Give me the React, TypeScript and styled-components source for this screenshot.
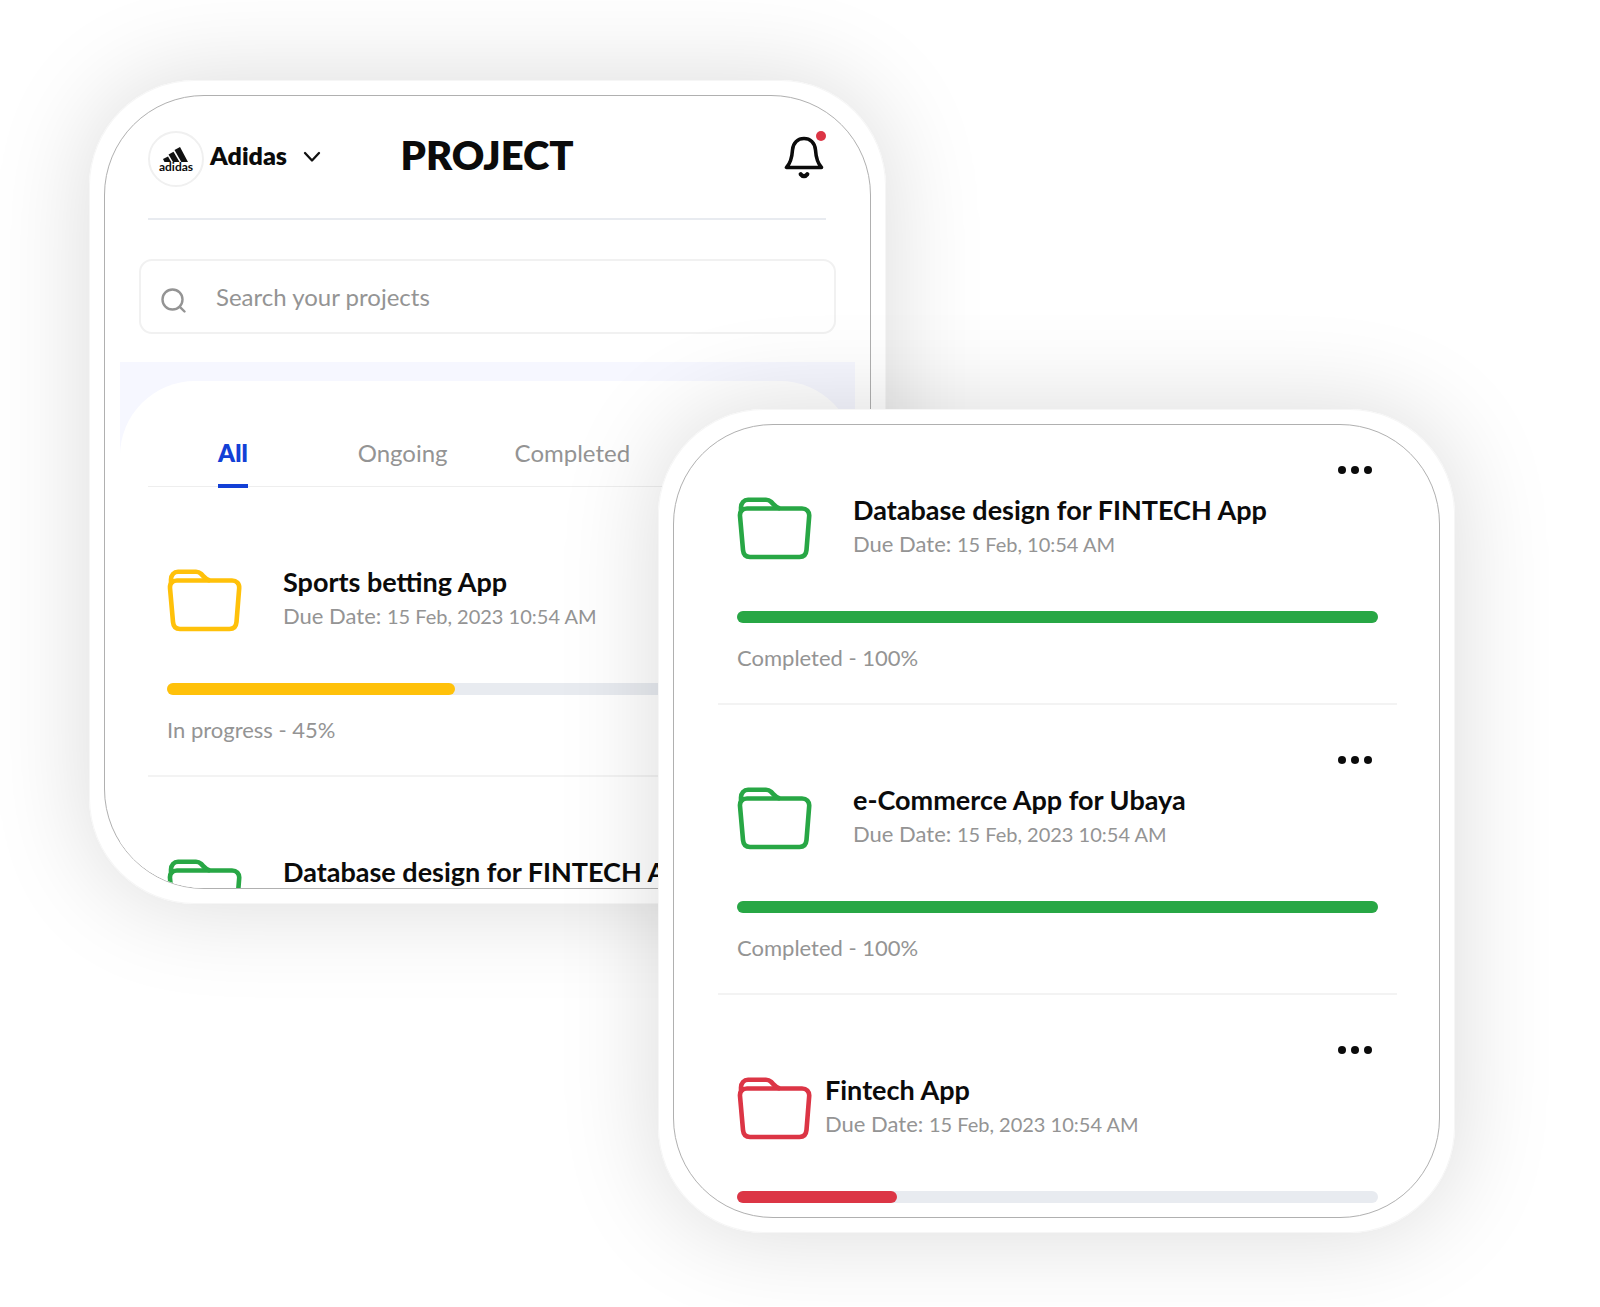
import React from "react";
import styled, { createGlobalStyle } from "styled-components";

const GlobalStyle = createGlobalStyle`
  *, *::before, *::after { box-sizing: border-box; }
  body { margin: 0; background: #ffffff; font-family: Lato, "Liberation Sans", sans-serif; color: #0b0b0b; }
  h1, h2, p, ul { margin: 0; padding: 0; }
  ul { list-style: none; }
  button { font: inherit; color: inherit; background: none; border: 0; padding: 0; cursor: pointer; }
`;

const Stage = styled.main`
  display: grid;
  grid-template-columns: 569fr 228fr 569fr;
  align-items: start;
  padding: 80px 145px 73px 89px;
`;

const Phone = styled.section<{ $front?: boolean }>`
  grid-row: 1;
  grid-column: ${(p) => (p.$front ? "2 / 4" : "1 / 3")};
  margin-top: ${(p) => (p.$front ? "329px" : "0")};
  display: flex;
  height: 824px;
  min-width: 0;
  padding: 15px;
  border-radius: 106px;
  background: #ffffff;
  box-shadow: 0 0 100px rgba(0, 0, 0, 0.15), inset 0 0 0 1px #f6f6f6;
`;

const Screen = styled.div`
  flex: 1;
  min-width: 0;
  overflow: hidden;
  border: 1px solid #b0b0b0;
  border-radius: 100px;
`;

const Header = styled.header`
  display: grid;
  grid-template-columns: 1fr auto 1fr;
  align-items: start;
  margin: 0 44px 0 43px;
  padding: 35px 0 31px;
  border-bottom: 2px solid #e8ebf0;
`;

const Account = styled.button`
  display: flex;
  justify-self: start;
  gap: 6px;
`;

const Avatar = styled.span`
  display: flex;
  flex-direction: column;
  align-items: center;
  justify-content: center;
  width: 56px;
  height: 56px;
  border: 2px solid #f0f0f0;
  border-radius: 50%;
`;

const AvatarWord = styled.span`
  font-size: 12px;
  line-height: 9px;
  font-weight: 700;
`;

const AccountName = styled.span`
  display: flex;
  align-items: center;
  gap: 16px;
  height: 48px;
  font-size: 25px;
  font-weight: 800;
  svg { margin-top: 4px; }
`;

const PageTitle = styled.h1`
  font-size: 40px;
  line-height: 48px;
  font-weight: 800;
`;

const BellButton = styled.button`
  position: relative;
  display: flex;
  justify-self: end;
  padding: 4px 2px 0 0;
`;

const BellDot = styled.span`
  position: absolute;
  top: 0;
  right: 0;
  width: 10px;
  height: 10px;
  border-radius: 50%;
  background: #dc3545;
`;

const SearchBox = styled.label`
  display: flex;
  align-items: center;
  gap: 30px;
  height: 75px;
  margin: 39px 34px 28px;
  padding: 0 20px;
  border: 2px solid #f1f1f1;
  border-radius: 13px;
  svg { margin-top: 8px; }
`;

const SearchInput = styled.input`
  flex: 1;
  min-width: 0;
  border: 0;
  outline: 0;
  padding: 0;
  background: none;
  font: inherit;
  font-size: 24px;
  &::placeholder { color: #949494; opacity: 1; }
`;

const Band = styled.div`
  margin: 0 15px;
  padding-top: 19px;
  background: linear-gradient(#f6f7ff 0 100px, #ffffff 100px);
`;

const Panel = styled.div`
  padding: 48px 28px 0;
  border-radius: 75px 75px 0 0;
  background: #ffffff;
`;

const Tabs = styled.nav`
  display: grid;
  grid-template-columns: repeat(4, 1fr);
  justify-items: center;
  border-bottom: 1px solid #eeeeee;
`;

const Tab = styled.button<{ $active?: boolean }>`
  height: 59px;
  margin-bottom: -2px;
  padding-bottom: 9px;
  border-bottom: 4px solid ${(p) => (p.$active ? "#1340d6" : "transparent")};
  color: ${(p) => (p.$active ? "#1340d6" : "#949494")};
  font-size: 24px;
  font-weight: ${(p) => (p.$active ? 800 : 400)};
`;

const List = styled.ul<{ $scrolled?: boolean }>`
  margin: ${(p) => (p.$scrolled ? "-10px 42px 0 44px" : "0")};
`;

const Card = styled.li`
  height: 290px;
  padding: 46px 19px 0;
  border-bottom: 2px solid #f3f3f3;
`;

const MoreButton = styled.button`
  display: flex;
  gap: 5px;
  margin: 0 6px 0 auto;
  padding: 5px 0;
`;

const MoreDot = styled.span`
  width: 8px;
  height: 8px;
  border-radius: 50%;
  background: #0b0b0b;
`;

const Summary = styled.div<{ $tight?: boolean }>`
  display: flex;
  gap: ${(p) => (p.$tight ? "13px" : "41px")};
  height: 82px;
  padding-top: 18px;
`;

const Details = styled.div`
  margin-top: -5px;
`;

const CardTitle = styled.h2`
  font-size: 27px;
  line-height: 35px;
  font-weight: 700;
  white-space: nowrap;
`;

const Muted = styled.p`
  color: #949494;
  font-size: 22px;
  line-height: 34px;
  white-space: nowrap;
`;

const DateText = styled.time`
  font-size: 20px;
`;

const Track = styled.div`
  height: 12px;
  margin: 50px 0 18px;
  border-radius: 6px;
  background: #e8ebf0;
`;

const Fill = styled.div<{ $color: string }>`
  height: 100%;
  border-radius: 6px;
  background: ${(p) => p.$color};
`;

const FolderIcon = ({ color }: { color: string }) => (
  <svg width="75" height="64" viewBox="0 0 75 64" fill="none" stroke={color} strokeWidth="4.6" strokeLinejoin="round" aria-hidden="true">
    <path d="M10 11.500H65c4.500 0 7.500 3 7.200 7.500L69.500 53c-.4 4.500-3 7-7 7H13C9 60 6.400 57.500 6 53L3 19C2.600 14.500 5.500 11.500 10 11.500Z" />
    <path d="M4 15V10.500C4 6 7 2.800 11 2.800H29c2 0 3.500.6 5 2 3 2.700 4.500 6 9 6.700" />
  </svg>
);

const AdidasMark = () => (
  <svg width="26" height="15" viewBox="0 0 26 15" fill="#111111" aria-hidden="true">
    <path d="M0 12 5 9.500 8.200 15H1.500Z" />
    <path d="M5.500 7.500 10.500 4.700 16.500 15H10Z" />
    <path d="M11.500 3 17 0 25 15H18.300Z" />
  </svg>
);

const ChevronIcon = () => (
  <svg width="18" height="12" viewBox="0 0 18 12" fill="none" stroke="#111111" strokeWidth="2.300" strokeLinecap="round" strokeLinejoin="round" aria-hidden="true">
    <path d="M2 2 9 9.500 16 2" />
  </svg>
);

const BellIcon = () => (
  <svg width="40" height="44" viewBox="0 0 40 44" fill="none" stroke="#0b0b0b" strokeWidth="3.600" strokeLinecap="round" strokeLinejoin="round" aria-hidden="true">
    <path d="M2.500 32.500H37.500C33.500 28 32 23 31.500 15 31 7.500 26 3.500 20 3.500S9 7.500 8.500 15C8 23 6.500 28 2.500 32.500Z" />
    <path d="M16.700 39.300c1.800 2.500 4.800 2.500 6.600 0" strokeWidth="4.200" />
  </svg>
);

const SearchIcon = () => (
  <svg width="25" height="25" viewBox="0 0 25 25" fill="none" stroke="#949494" strokeWidth="2.400" strokeLinecap="round" aria-hidden="true">
    <circle cx="11.500" cy="11.500" r="10" />
    <path d="M18.800 18.800 23.500 23.500" />
  </svg>
);

type Project = { title: string; date: string; status: string; percent: number; color: string; tight?: boolean };

const AMBER = "#ffc10a";
const GREEN = "#28a745";
const RED = "#dc3545";

const database: Project = { title: "Database design for FINTECH App", date: "15 Feb, 10:54 AM", status: "Completed", percent: 100, color: GREEN };

const recent: Project[] = [
  { title: "Sports betting App", date: "15 Feb, 2023 10:54 AM", status: "In progress", percent: 45, color: AMBER },
  database,
];

const older: Project[] = [
  database,
  { title: "e-Commerce App for Ubaya", date: "15 Feb, 2023 10:54 AM", status: "Completed", percent: 100, color: GREEN },
  { title: "Fintech App", date: "15 Feb, 2023 10:54 AM", status: "In progress", percent: 25, color: RED, tight: true },
];

const ProjectCard = ({ title, date, status, percent, color, tight }: Project) => (
  <Card>
    <MoreButton aria-label={`More options for ${title}`}>
      <MoreDot />
      <MoreDot />
      <MoreDot />
    </MoreButton>
    <Summary $tight={tight}>
      <FolderIcon color={color} />
      <Details>
        <CardTitle>{title}</CardTitle>
        <Muted>
          Due Date: <DateText>{date}</DateText>
        </Muted>
      </Details>
    </Summary>
    <Track role="progressbar" aria-label={title} aria-valuenow={percent}>
      <Fill $color={color} style={{ width: `${percent}%` }} />
    </Track>
    <Muted>
      {status} - {percent}%
    </Muted>
  </Card>
);

export default function App() {
  return (
    <>
      <GlobalStyle />
      <Stage>
        <Phone>
          <Screen>
            <Header>
              <Account>
                <Avatar>
                  <AdidasMark />
                  <AvatarWord>adidas</AvatarWord>
                </Avatar>
                <AccountName>
                  Adidas
                  <ChevronIcon />
                </AccountName>
              </Account>
              <PageTitle>PROJECT</PageTitle>
              <BellButton aria-label="Notifications">
                <BellIcon />
                <BellDot />
              </BellButton>
            </Header>
            <SearchBox>
              <SearchIcon />
              <SearchInput type="search" placeholder="Search your projects" aria-label="Search your projects" />
            </SearchBox>
            <Band>
              <Panel>
                <Tabs>
                  <Tab $active>All</Tab>
                  <Tab>Ongoing</Tab>
                  <Tab>Completed</Tab>
                </Tabs>
                <List>
                  {recent.map((p) => (
                    <ProjectCard key={p.title} {...p} />
                  ))}
                </List>
              </Panel>
            </Band>
          </Screen>
        </Phone>
        <Phone $front>
          <Screen>
            <List $scrolled>
              {older.map((p) => (
                <ProjectCard key={p.title} {...p} />
              ))}
            </List>
          </Screen>
        </Phone>
      </Stage>
    </>
  );
}
